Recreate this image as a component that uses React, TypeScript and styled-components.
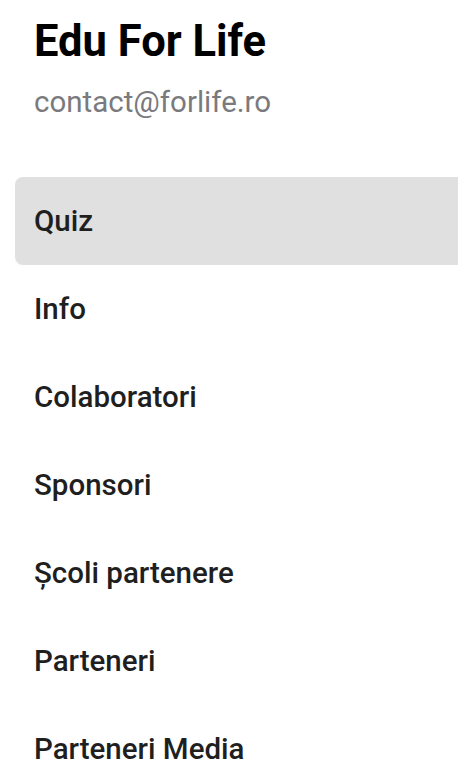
import React from "react";
import styled, { createGlobalStyle } from "styled-components";

const Global = createGlobalStyle`
  html, body {
    margin: 0;
    padding: 0;
    background: #ffffff;
    overflow: hidden;
  }
  body {
    font-family: Roboto, "Noto Sans", sans-serif;
  }
`;

const Drawer = styled.nav`
  width: 458px;
  height: 778px;
  overflow: hidden;
  background: #ffffff;
  display: flex;
  flex-direction: column;
`;

const Header = styled.header`
  display: flex;
  flex-direction: column;
  padding: 17px 0 0 34px;
`;

const Title = styled.h1`
  margin: 0;
  font-family: Roboto, sans-serif;
  font-weight: 700;
  font-size: 43.5px;
  line-height: 50px;
  color: #000000;
`;

const Email = styled.div`
  margin-top: 17px;
  font-family: Roboto, sans-serif;
  font-weight: 400;
  font-size: 29.5px;
  line-height: 36px;
  color: #7a7a7e;
`;

const Menu = styled.ul`
  list-style: none;
  margin: 57px 0 0 15px;
  padding: 0;
  display: flex;
  flex-direction: column;
`;

const Item = styled.li<{ $active?: boolean }>`
  height: 88px;
  display: flex;
  align-items: center;
  padding-left: 19px;
  margin-right: -20px;
  border-radius: 8px;
  background: ${(p) => (p.$active ? "#e0e0e0" : "transparent")};
  font-family: Roboto, sans-serif;
  font-weight: 500;
  font-size: 29.5px;
  color: #1f1f1f;
`;

const items = [
  "Quiz",
  "Info",
  "Colaboratori",
  "Sponsori",
  "Școli partenere",
  "Parteneri",
  "Parteneri Media",
];

export default function App() {
  return (
    <>
      <Global />
      <Drawer>
        <Header>
          <Title>Edu For Life</Title>
          <Email>contact@forlife.ro</Email>
        </Header>
        <Menu>
          {items.map((t, i) => (
            <Item key={t} $active={i === 0}>
              {t}
            </Item>
          ))}
        </Menu>
      </Drawer>
    </>
  );
}
